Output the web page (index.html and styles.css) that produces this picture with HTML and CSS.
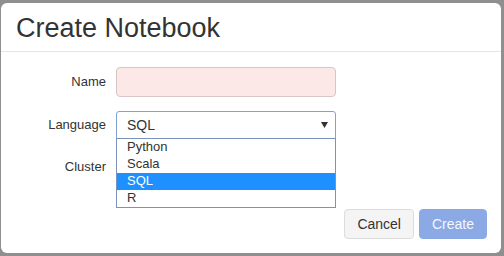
FILE: index.html
```html
<!DOCTYPE html>
<html lang="en">
<head>
    <meta charset="UTF-8">
    <title>Create Notebook</title>
    <link rel="stylesheet" href="styles.css">
</head>
<body>
    <div class="modal">
        <div class="modal-header">
            <h4>Create Notebook</h4>
        </div>
        <form class="modal-body">
            <div class="form-row">
                <label>Name</label>
                <input type="text" class="field field-error">
            </div>
            <div class="form-row">
                <label>Language</label>
                <div class="select-wrap">
                    <div class="field select-box">
                        <span>SQL</span>
                        <svg class="caret" width="7" height="6" viewBox="0 0 7 6"><path d="M0 0h7L3.5 6z" fill="#333"/></svg>
                    </div>
                    <ul class="dropdown">
                        <li>Python</li>
                        <li>Scala</li>
                        <li class="active">SQL</li>
                        <li>R</li>
                    </ul>
                </div>
            </div>
            <div class="form-row">
                <label>Cluster</label>
                <div class="field blank"></div>
            </div>
        </form>
        <div class="modal-footer">
            <button class="btn">Cancel</button>
            <button class="btn btn-primary" disabled>Create</button>
        </div>
    </div>
</body>
</html>
```

FILE: styles.css
```css
body {
    margin: 0;
    padding: 3px 3px 3px 1px;
    background: #8f8f8f;
    font-family: "Liberation Sans", Arial, sans-serif;
    color: #333;
}
.modal {
    width: 500px;
    height: 250px;
    background: #fff;
    border-radius: 6px;
    display: flex;
    flex-direction: column;
}
.modal-header {
    padding: 11px 15px 9px;
    border-bottom: 1px solid #e5e5e5;
}
.modal-header h4 {
    margin: 0;
    font-size: 27px;
    font-weight: normal;
    line-height: 28px;
}
.modal-body {
    padding: 15px 0 0 15px;
}
.form-row {
    display: flex;
    align-items: center;
    margin-bottom: 14px;
    font-size: 13px;
}
.form-row label {
    width: 90px;
    padding-right: 10px;
    text-align: right;
    margin-top: -1px;
}
.field {
    box-sizing: border-box;
    width: 220px;
    height: 28px;
    border: 1px solid #ccc;
    border-radius: 4px;
    font: inherit;
}
.field-error {
    height: 30px;
    background: #fde8e8;
    border-color: #d8c6c6;
}
.blank {
    visibility: hidden;
}
.select-wrap {
    position: relative;
}
.select-box {
    display: flex;
    align-items: center;
    justify-content: space-between;
    padding: 0 7px 0 10px;
    border-color: #7fa3d8;
    border-radius: 3px 3px 0 0;
    font-size: 14px;
}
.dropdown {
    position: absolute;
    top: 27px;
    left: 0;
    width: 220px;
    box-sizing: border-box;
    margin: 0;
    padding: 0;
    list-style: none;
    background: #fff;
    border: 1px solid #7b93bb;
    font-size: 13px;
    z-index: 2;
}
.dropdown li {
    height: 17px;
    line-height: 16px;
    padding-left: 10px;
}
.dropdown li.active {
    background: #1e90ff;
    color: #fff;
}
.modal-footer {
    margin-top: auto;
    display: flex;
    justify-content: flex-end;
    gap: 5px;
    padding: 0 14px 14px;
}
.btn {
    height: 30px;
    padding: 0 12px;
    border: 1px solid #dcdcdc;
    border-radius: 4px;
    background: #f4f4f4;
    color: #333;
    font-family: inherit;
    font-size: 14px;
}
.btn-primary {
    border-color: #8aa9e5;
    background: #8aa9e5;
    color: #f4f7fd;
}
```
